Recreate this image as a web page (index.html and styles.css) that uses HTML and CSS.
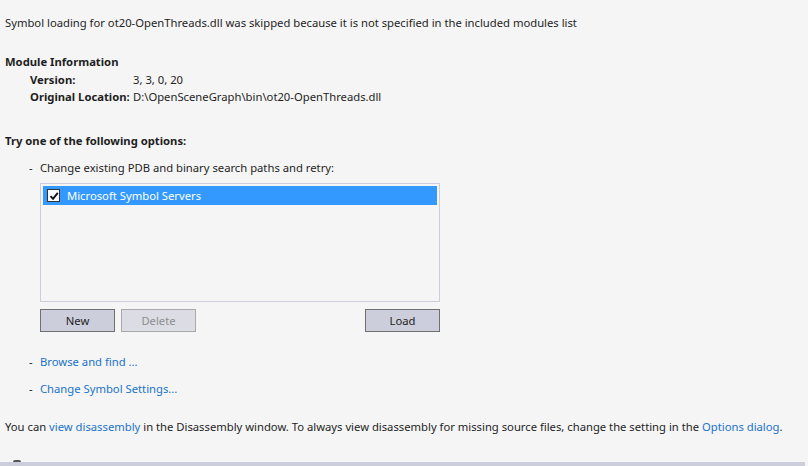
FILE: index.html
```html
<!DOCTYPE html>
<html>
<head>
<meta charset="utf-8">
<link rel="stylesheet" href="styles.css">
</head>
<body>
<div class="page">
  <p class="msg">Symbol loading for ot20-OpenThreads.dll was skipped because it is not specified in the included modules list</p>
  <h3 class="heading first">Module Information</h3>
  <div class="info">
    <span class="label">Version:</span><span class="value">3, 3, 0, 20</span>
    <span class="label">Original Location:</span><span class="value">D:\OpenSceneGraph\bin\ot20-OpenThreads.dll</span>
  </div>
  <h3 class="heading second">Try one of the following options:</h3>
  <ul class="options">
    <li class="option">
      <span class="dash">-</span>
      <div class="option-body">
        <div>Change existing PDB and binary search paths and retry:</div>
        <div class="listbox">
          <div class="list-row selected">
            <span class="checkbox"><svg width="10" height="10" viewBox="0 0 10 10"><path d="M1.5 5.2 L4 7.8 L8.8 1.8" fill="none" stroke="#111" stroke-width="1.9"/></svg></span>
            <span>Microsoft Symbol Servers</span>
          </div>
        </div>
        <div class="buttons">
          <button class="btn">New</button>
          <button class="btn disabled">Delete</button>
          <span class="spacer"></span>
          <button class="btn">Load</button>
        </div>
      </div>
    </li>
    <li class="option link-option"><span class="dash">-</span><a class="link" href="#">Browse and find ...</a></li>
    <li class="option link-option second-link"><span class="dash">-</span><a class="link" href="#">Change Symbol Settings...</a></li>
  </ul>
  <p class="footer-msg">You can <a class="link" href="#">view disassembly</a> in the Disassembly window. To always view disassembly for missing source files, change the setting in the <a class="link" href="#">Options dialog</a>.</p>
  <div class="bottom">
    <span class="nub"></span>
    <div class="bar"></div>
  </div>
</div>
</body>
</html>
```
FILE: styles.css
```css
* { box-sizing: border-box; }
html, body {
  margin: 0;
  padding: 0;
  background: #f5f5f5;
}
body {
  width: 808px;
  height: 466px;
  overflow: hidden;
  font-family: "Noto Sans", "Open Sans", sans-serif;
  font-size: 11.25px;
  line-height: 16px;
  color: #1e1e1e;
}
.page {
  height: 466px;
  display: flex;
  flex-direction: column;
  padding-left: 5px;
}
.msg {
  margin: 15px 0 0 0;
  white-space: nowrap;
}
.heading {
  margin: 0;
  font-size: 11.25px;
  font-weight: bold;
  line-height: 16px;
}
.heading.first { margin-top: 23px; }
.heading.second { margin-top: 28px; }
.info {
  display: grid;
  grid-template-columns: 103px auto;
  grid-auto-rows: 16px;
  row-gap: 1px;
  margin: 2px 0 0 25px;
  white-space: nowrap;
}
.label { font-weight: bold; }
.options {
  list-style: none;
  margin: 11px 0 0 0;
  padding: 0;
}
.option {
  display: flex;
  margin-left: 24px;
}
.dash {
  width: 11px;
  flex: none;
}
.option-body {
  width: 400px;
}
.listbox {
  margin-top: 7px;
  height: 119px;
  border: 1px solid #cccedb;
  background: #f5f5f5;
  padding: 2px;
}
.list-row {
  height: 19px;
  display: flex;
  align-items: center;
  padding-left: 4px;
  gap: 7px;
}
.list-row.selected {
  background: #3399ff;
  color: #ffffff;
}
.checkbox {
  width: 13px;
  height: 13px;
  border: 1px solid #333333;
  background: #ffffff;
  display: flex;
  align-items: center;
  justify-content: center;
}
.checkbox svg { display: block; }
.buttons {
  display: flex;
  gap: 6px;
  margin-top: 7px;
}
.spacer { flex: 1; }
.btn {
  width: 75px;
  height: 23px;
  border: 1px solid #707070;
  background: #cccedb;
  font-family: inherit;
  font-size: 11.25px;
  color: #1e1e1e;
  padding: 0;
}
.btn.disabled {
  border-color: #a9a9a9;
  background: #dcdde4;
  color: #8d8d8d;
}
.link-option { margin-top: 22px; }
.second-link { margin-top: 11px; }
.link {
  color: #1a73c8;
  text-decoration: none;
}
.footer-msg {
  margin: 22px 0 0 0;
  white-space: nowrap;
}
.bottom {
  margin-top: auto;
  margin-left: -5px;
  position: relative;
}
.nub {
  position: absolute;
  left: 13px;
  top: -2px;
  width: 8px;
  height: 2px;
  border-radius: 2px 2px 0 0;
  background: #555;
}
.bar {
  height: 4px;
  width: 805px;
  background: #cccedb;
}
```
